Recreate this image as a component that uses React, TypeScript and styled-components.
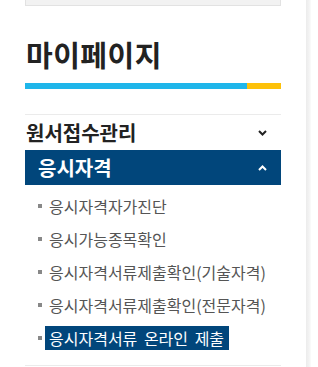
import React from 'react';
import styled, { createGlobalStyle } from 'styled-components';

const GlobalStyle = createGlobalStyle`
  html, body {
    margin: 0;
    padding: 0;
    background: #fff;
  }
  body {
    font-family: "Noto Sans CJK KR", "Noto Sans", sans-serif;
  }
`;

const Page = styled.div`
  display: flex;
  width: 318px;
  height: 367px;
  overflow: hidden;
`;

const Sidebar = styled.div`
  margin-left: 25px;
  width: 256px;
  display: flex;
  flex-direction: column;
`;

const EdgeShadow = styled.div`
  margin-left: 25px;
  width: 5px;
  height: 100%;
  background: linear-gradient(to right, #ececec, #f3f3f3 60%, #fbfbfb);
`;

const TopBox = styled.div`
  height: 6px;
  background: #f2f2f2;
  border: 1px solid #e2e2e2;
  border-top: none;
  box-sizing: border-box;
`;

const Title = styled.h2`
  margin: 28px 0 0 1px;
  font-size: 29px;
  font-weight: 700;
  line-height: 40px;
  color: #222;
  letter-spacing: 0.5px;
`;

const TitleBar = styled.div`
  margin-top: 9px;
  height: 6px;
  display: flex;
`;

const BarPart = styled.div<{ $color: string; $width: number }>`
  width: ${p => p.$width}px;
  background: ${p => p.$color};
`;

const Divider = styled.div`
  margin-top: 25px;
  height: 1px;
  background: #ebebeb;
`;

const MenuHead = styled.div<{ $active?: boolean }>`
  display: flex;
  align-items: center;
  justify-content: space-between;
  height: 35px;
  padding: ${p => (p.$active ? '0 14px 0 13px' : '0 14px 0 1px')};
  background: ${p => (p.$active ? '#01467b' : 'transparent')};
  color: ${p => (p.$active ? '#fff' : '#222')};
  font-size: 20px;
  font-weight: 700;
`;

const SubList = styled.ul`
  list-style: none;
  margin: 4px 0 0;
  padding: 0 0 0 13px;
  display: flex;
  flex-direction: column;
`;

const SubItem = styled.li`
  display: flex;
  align-items: center;
  height: 33px;
`;

const Bullet = styled.span`
  width: 4px;
  height: 4px;
  background: #888;
  margin-right: 7px;
  flex-shrink: 0;
`;

const SubLabel = styled.span<{ $active?: boolean }>`
  font-size: 16px;
  line-height: 24px;
  color: ${p => (p.$active ? '#fff' : '#555')};
  background: ${p => (p.$active ? '#01467b' : 'transparent')};
  padding: ${p => (p.$active ? '0 5px 0 4px' : '0')};
  margin-left: ${p => (p.$active ? '-4px' : '0')};
  word-spacing: 3px;
  white-space: nowrap;
`;

const BottomLine = styled.div`
  margin-top: 11px;
  height: 1px;
  background: #ebebeb;
`;

const Chevron: React.FC<{ up?: boolean; color: string }> = ({ up, color }) => (
  <svg width="9" height="6" viewBox="0 0 9 6">
    <polyline
      points={up ? '1,5 4.5,1.5 8,5' : '1,1 4.5,4.5 8,1'}
      fill="none"
      stroke={color}
      strokeWidth="2"
    />
  </svg>
);

const subItems = [
  '응시자격자가진단',
  '응시가능종목확인',
  '응시자격서류제출확인(기술자격)',
  '응시자격서류제출확인(전문자격)',
  '응시자격서류 온라인 제출',
];

export default function App() {
  return (
    <Page>
      <GlobalStyle />
      <Sidebar>
        <TopBox />
        <Title>마이페이지</Title>
        <TitleBar>
          <BarPart $color="#1fb6ea" $width={222} />
          <BarPart $color="#fdc10a" $width={34} />
        </TitleBar>
        <Divider />
        <MenuHead>
          <span>원서접수관리</span>
          <Chevron color="#222" />
        </MenuHead>
        <MenuHead $active>
          <span>응시자격</span>
          <Chevron up color="#fff" />
        </MenuHead>
        <SubList>
          {subItems.map((label, i) => (
            <SubItem key={label}>
              <Bullet />
              <SubLabel $active={i === subItems.length - 1}>{label}</SubLabel>
            </SubItem>
          ))}
        </SubList>
        <BottomLine />
      </Sidebar>
      <EdgeShadow />
    </Page>
  );
}
